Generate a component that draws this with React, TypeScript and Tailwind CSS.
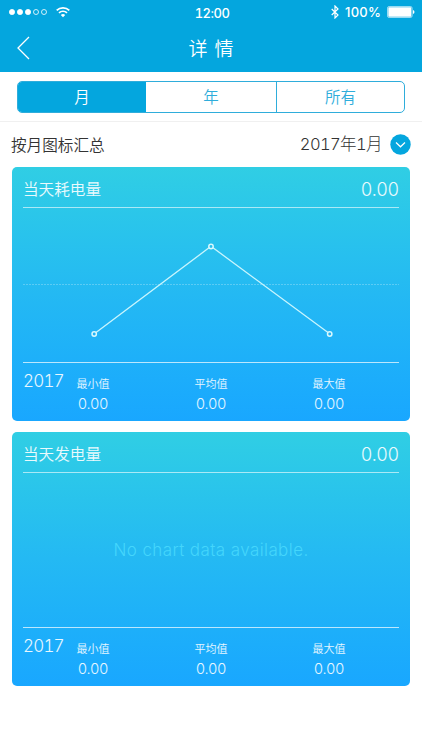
import React from "react";

const latin = "font-['Inter','Noto_Sans_CJK_SC',sans-serif]";
const cjk = "font-['Noto_Sans_CJK_SC',sans-serif]";

function StatusBar() {
  return (
    <div className="flex h-6 items-center justify-between pl-[9px] pr-[7px]">
      <div className="flex w-[150px] items-center">
        <svg width="39" height="8" viewBox="0 0 39 8" fill="white" stroke="white" strokeWidth="0.8">
          <circle cx="3" cy="4" r="2.6" />
          <circle cx="11" cy="4" r="2.6" />
          <circle cx="19" cy="4" r="2.6" />
          <circle cx="27" cy="4" r="2.5" fill="none" />
          <circle cx="35" cy="4" r="2.5" fill="none" />
        </svg>
        <svg className="ml-2" width="14" height="12" viewBox="0 0 14 12" fill="none" stroke="white" strokeWidth="1.7">
          <path d="M.7 4.4a8.9 8.9 0 0 1 12.6 0M3 6.9a5.7 5.7 0 0 1 8 0" />
          <path d="M7 11.2 4.8 9a3.1 3.1 0 0 1 4.4 0Z" fill="white" stroke="none" />
        </svg>
      </div>
      <span className="mt-px font-['Inter',sans-serif] text-[13px] font-medium leading-6 tabular-nums tracking-[-0.5px]">12:00</span>
      <div className="flex w-[150px] items-center justify-end">
        <svg width="8" height="14" viewBox="0 0 8 14" fill="none" stroke="white" strokeWidth="1.2">
          <path d="M.7 4 7 10 4 13V1l3 3-6.3 6" />
        </svg>
        <span className="ml-1.5 font-['Inter',sans-serif] text-[13px] font-medium leading-6 tracking-[0.2px]">100%</span>
        <svg className="ml-1.5" width="28" height="12" viewBox="0 0 28 12">
          <rect x=".5" y=".5" width="24.6" height="11" rx="1.6" fill="none" stroke="white" strokeOpacity=".6" />
          <rect x="1.300" y="1.300" width="23" height="9.400" rx=".7" fill="white" />
          <path d="M26 4c2 .7 2 3.300 0 4Z" fill="white" />
        </svg>
      </div>
    </div>
  );
}

function Stat({ label, value }: { label: string; value: string }) {
  return (
    <div className="flex w-[118px] flex-col items-center">
      <span className={`${cjk} text-[11px] font-[350] leading-4`}>{label}</span>
      <span className="mt-[3px] text-[14.5px] font-light leading-5">{value}</span>
    </div>
  );
}

function Card({ title, children }: { title: string; children: React.ReactNode }) {
  return (
    <section className="flex h-[254px] flex-col rounded-[5px] bg-linear-to-b from-[#30cee4] via-[#24b9f3] to-[#19a7ff] px-[11px] text-white/90">
      <div className="flex h-[41px] items-center justify-between border-b border-white/60 pt-1">
        <h2 className={`${cjk} text-[15.6px] font-[350]`}>{title}</h2>
        <span className="text-[18px] font-light tracking-[0.1px]">0.00</span>
      </div>
      <div className="flex h-[155px] items-center justify-center border-b border-white/70">{children}</div>
      <div className="relative flex h-[58px] justify-center pt-3">
        <span className="absolute left-0 top-[6px] text-[17px] font-light leading-6 tabular-nums tracking-[-0.8px]">2017</span>
        <Stat label="最小值" value="0.00" />
        <Stat label="平均值" value="0.00" />
        <Stat label="最大值" value="0.00" />
      </div>
    </section>
  );
}

export default function App() {
  return (
    <div className={`${latin} h-[750px] w-full overflow-hidden bg-white`}>
      <header className="h-[72px] bg-[#04a6de] text-white">
        <StatusBar />
        <div className="flex h-12 items-center justify-between px-[17px]">
          <svg width="13" height="24" viewBox="0 0 13 24" fill="none" stroke="white" strokeWidth="1.3">
            <path d="M12 1 1 12l11 11" />
          </svg>
          <h1 className={`${cjk} text-[19px] font-[350] [word-spacing:3px]`}>详 情</h1>
          <span className="w-[13px]" />
        </div>
      </header>

      <div className="h-[50px] border-b border-[#f0f0f0] px-[17px] pt-[9px]">
        <div className={`${cjk} grid h-8 grid-cols-[128px_131px_1fr] overflow-hidden rounded-[5px] border border-[#2faddb] text-[15.5px] font-[350] text-[#2faddb]`}>
          <button className="bg-[#04a6de] text-white">月</button>
          <button className="border-r border-[#2faddb]">年</button>
          <button>所有</button>
        </div>
      </div>

      <div className="flex h-[45px] items-center justify-between pl-[11px] pr-3 text-[#333]">
        <span className={`${cjk} text-[15.6px] font-[350]`}>按月图标汇总</span>
        <div className="flex items-center">
          <span className="text-[16.5px] font-light tabular-nums tracking-[-0.6px]">2017年1月</span>
          <svg className="ml-2 -mr-px" width="21" height="21" viewBox="0 0 21 21">
            <circle cx="10.500" cy="10.500" r="10.200" fill="#04a6de" />
            <path d="m6 8.500 4.500 4.300L15 8.500" fill="none" stroke="white" strokeWidth="1.2" />
          </svg>
        </div>
      </div>

      <main className="flex flex-col gap-[11px] pl-3 pr-3">
        <Card title="当天耗电量">
          <svg className="h-[154px] w-full" viewBox="0 0 376 154" fill="none">
            <path d="M0 76.500H376" stroke="white" strokeOpacity=".25" strokeDasharray="2 1" />
            <path d="M73 124.500 186 39.800M190 39.800 305 124.500" stroke="#c9f5fd" strokeWidth="1.300" />
            <g stroke="#d9f8fd" strokeWidth="1.500">
              <circle cx="71.200" cy="126" r="2.200" />
              <circle cx="188" cy="38.500" r="2.200" />
              <circle cx="306.700" cy="126" r="2.200" />
            </g>
          </svg>
        </Card>
        <Card title="当天发电量">
          <span className="pt-0.5 text-[17px] font-light tracking-[0.4px] text-[#44d6fc]">No chart data available.</span>
        </Card>
      </main>
    </div>
  );
}
